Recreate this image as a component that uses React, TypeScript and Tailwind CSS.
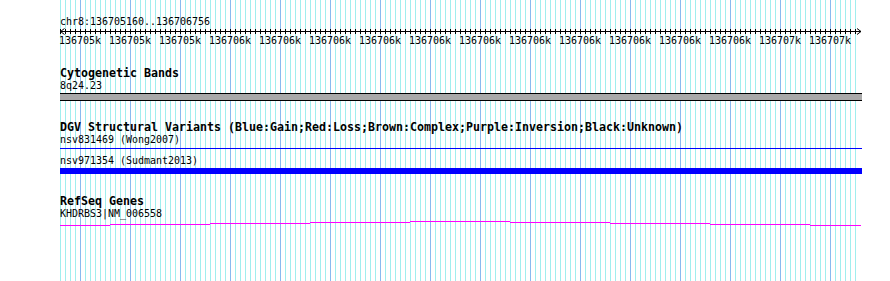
import React from "react";

const labels = [
  "136705k", "136705k", "136705k",
  "136706k", "136706k", "136706k", "136706k", "136706k", "136706k",
  "136706k", "136706k", "136706k", "136706k", "136706k",
  "136707k", "136707k",
];

function Ruler() {
  const ticks: number[] = [];
  for (let k = 0; k < 160; k++) ticks.push(k * 5 + 0.5);
  return (
    <svg width={802} height={8} className="block" shapeRendering="crispEdges">
      <line x1={0} y1={4.5} x2={801} y2={4.5} stroke="#000" strokeWidth={1} />
      {ticks.map((x) => (
        <line key={x} x1={x} y1={2} x2={x} y2={7} stroke="#000" strokeWidth={1} />
      ))}
      <polyline points="4.5,1.5 0.5,4.5 4.5,7.5" fill="none" stroke="#000" strokeWidth={1} shapeRendering="auto" />
      <polyline points="797,1.5 801,4.5 797,7.5" fill="none" stroke="#000" strokeWidth={1} shapeRendering="auto" />
    </svg>
  );
}

function GeneLine() {
  const segs: [number, number, number][] = [
    [0, 50, 6],
    [50, 150, 5],
    [150, 250, 4],
    [250, 350, 3],
    [350, 450, 2],
    [450, 550, 3],
    [550, 650, 4],
    [650, 750, 5],
    [750, 801, 6],
  ];
  return (
    <svg width={802} height={8} className="block" shapeRendering="crispEdges">
      {segs.map(([a, b, y]) => (
        <line key={a} x1={a} y1={y + 0.5} x2={b} y2={y + 0.5} stroke="#ff00ff" strokeWidth={1} />
      ))}
    </svg>
  );
}

export default function App() {
  return (
    <div className="w-[890px] h-[281px] bg-white flex text-black font-['DejaVu_Sans_Mono',monospace] overflow-hidden">
      <div className="w-[60px] shrink-0" />
      <div className="w-[802px] shrink-0 h-full flex flex-col bg-no-repeat bg-size-[797px_100%] bg-[image:repeating-linear-gradient(to_right,transparent_0_20px,#88bbee_20px_21px,transparent_21px_50px),repeating-linear-gradient(to_right,#a0eeee_0_1px,transparent_1px_5px)]">
        <div className="mt-[16px] h-[11px] leading-[11px] text-[9.97px] whitespace-nowrap">
          chr8:136705160..136706756
        </div>
        <Ruler />
        <div className="ml-[-5px] h-[11px] leading-[11px] text-[9.97px] grid grid-cols-[repeat(16,50px)] whitespace-nowrap">
          {labels.map((l, i) => (
            <div key={i} className="text-center">{l}</div>
          ))}
        </div>

        <div className="mt-[21px] h-[13px] leading-[13px] text-[11.63px] font-bold whitespace-nowrap">
          Cytogenetic Bands
        </div>
        <div className="h-[12px] leading-[12px] text-[9.97px] whitespace-nowrap">8q24.23</div>
        <div className="mt-px h-[8px] border-y border-black bg-[#a9a9a9]" />

        <div className="mt-[20px] h-[13px] leading-[13px] text-[11.63px] font-bold whitespace-nowrap">
          DGV Structural Variants (Blue:Gain;Red:Loss;Brown:Complex;Purple:Inversion;Black:Unknown)
        </div>
        <div className="h-[12px] leading-[12px] text-[9.97px] whitespace-nowrap">nsv831469 (Wong2007)</div>
        <div className="mt-[2px] h-px bg-[#0000ff]" />
        <div className="mt-[6px] h-[12px] leading-[12px] text-[9.97px] whitespace-nowrap">nsv971354 (Sudmant2013)</div>
        <div className="mt-px h-[6px] bg-[#0000ff]" />

        <div className="mt-[21px] h-[13px] leading-[13px] text-[11.63px] font-bold whitespace-nowrap">
          RefSeq Genes
        </div>
        <div className="h-[11px] leading-[11px] text-[9.97px] whitespace-nowrap">KHDRBS3|NM_006558</div>
        <GeneLine />
      </div>
    </div>
  );
}
